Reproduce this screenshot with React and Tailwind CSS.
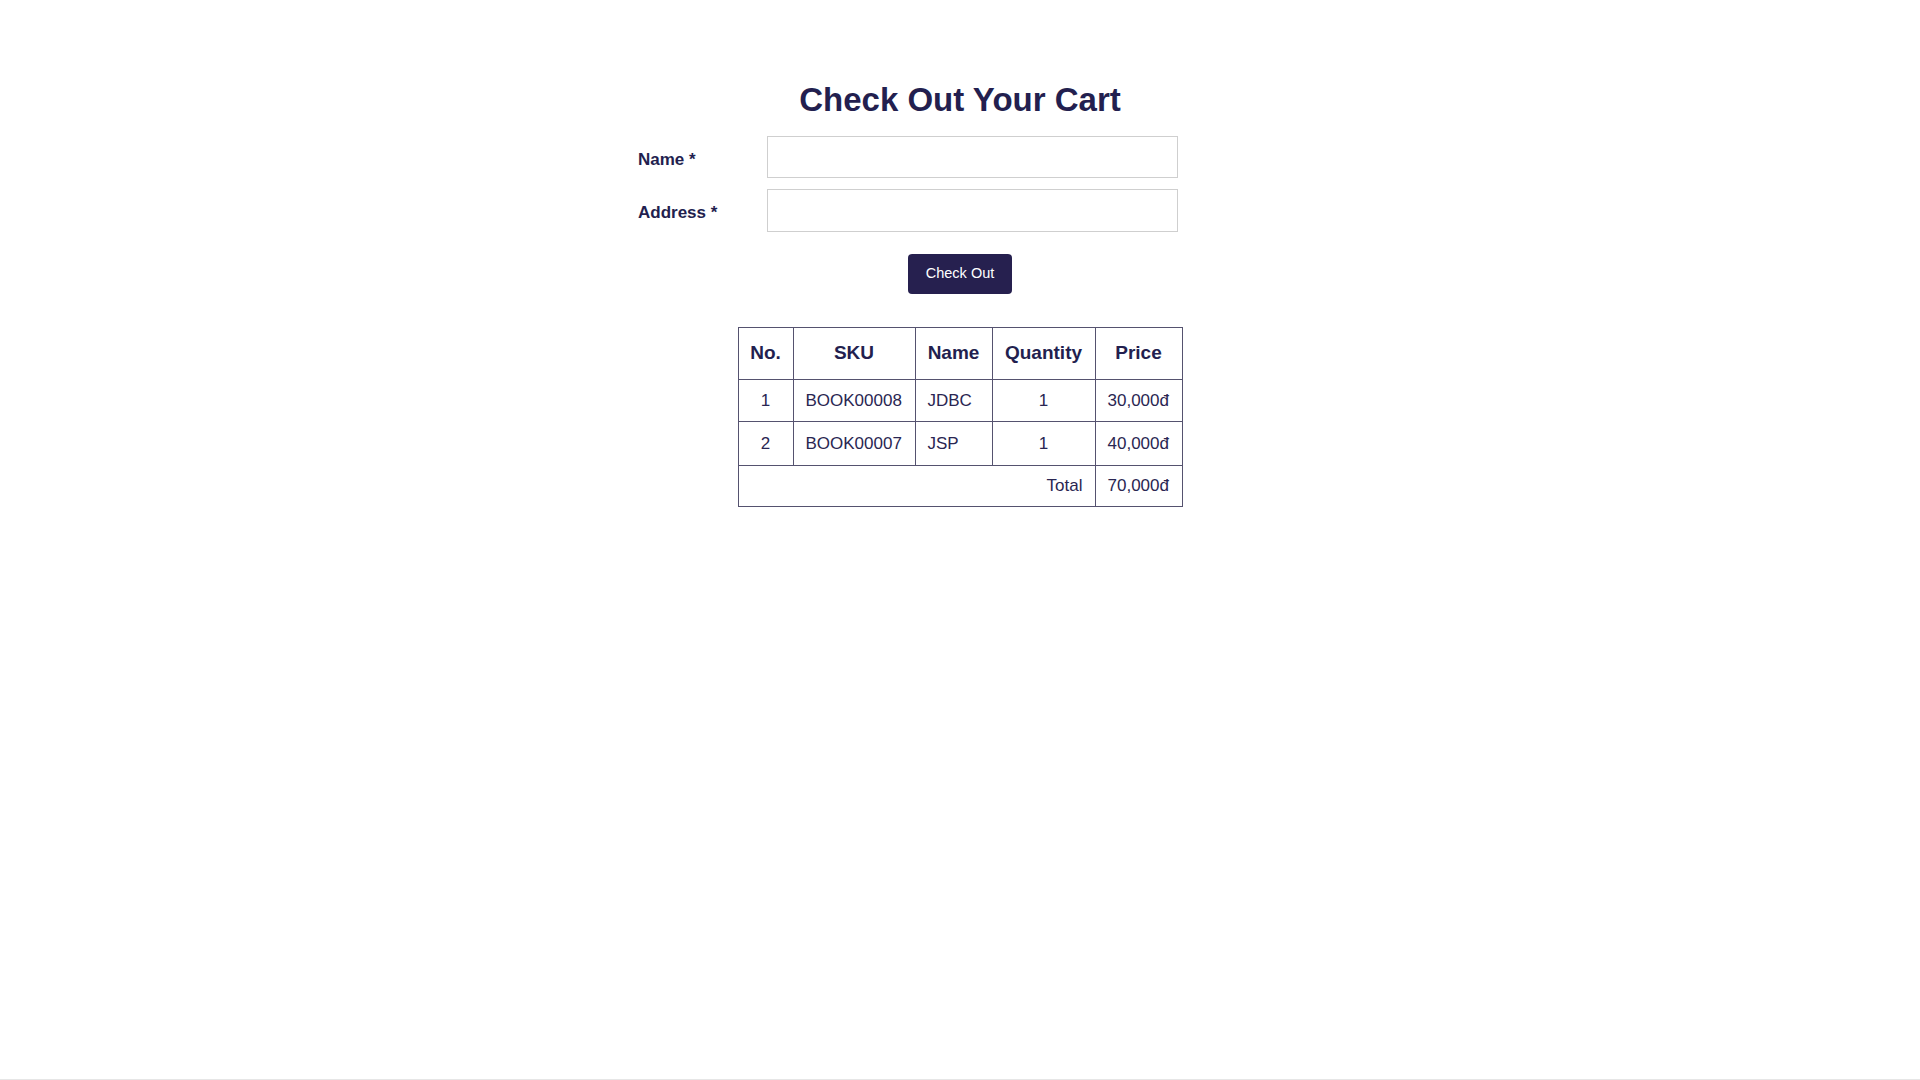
export default function App() {
  const items = [
    { no: 1, sku: 'BOOK00008', name: 'JDBC', qty: 1, price: '30,000đ' },
    { no: 2, sku: 'BOOK00007', name: 'JSP', qty: 1, price: '40,000đ' },
  ]

  return (
    <div className="h-[1080px] border-b border-[#e6e6e6] bg-white font-['Liberation_Sans',Arial,sans-serif] text-[#231f4f]">
      <div className="pt-[81px] flex flex-col items-center">
        <h1 className="text-[33px] leading-[38px] font-bold">Check Out Your Cart</h1>

        <form className="mt-[17px] w-[644px] flex flex-col gap-[11px]" onSubmit={(e) => e.preventDefault()}>
          <div className="flex items-center">
            <label className="w-[129px] pt-[5px] text-[17px] font-bold">Name *</label>
            <input className="w-[411px] h-[42px] border border-[#cfcfcf] px-3 text-[16px] outline-none" />
          </div>
          <div className="flex items-center">
            <label className="w-[129px] pt-[5px] text-[17px] font-bold">Address *</label>
            <input className="w-[411px] h-[43px] border border-[#cfcfcf] px-3 text-[16px] outline-none" />
          </div>
        </form>

        <button className="mt-[22px] w-[104px] h-[40px] rounded bg-[#26204f] text-white text-[14.5px]">
          Check Out
        </button>

        <table className="mt-[33px] w-[444px] table-fixed border-collapse border border-[#55526f]">
          <colgroup>
            <col className="w-[55px]" />
            <col className="w-[122px]" />
            <col className="w-[77px]" />
            <col className="w-[103px]" />
            <col className="w-[87px]" />
          </colgroup>
          <thead>
            <tr className="h-[52px] text-[19px] font-bold">
              <th className="border border-[#55526f]">No.</th>
              <th className="border border-[#55526f]">SKU</th>
              <th className="border border-[#55526f]">Name</th>
              <th className="border border-[#55526f]">Quantity</th>
              <th className="border border-[#55526f]">Price</th>
            </tr>
          </thead>
          <tbody className="text-[17px] text-[#2a2652]">
            {items.map((t, i) => (
              <tr key={t.sku} className={i === 0 ? 'h-[42px]' : 'h-[44px]'}>
                <td className="border border-[#55526f] text-center">{t.no}</td>
                <td className="border border-[#55526f] px-3 whitespace-nowrap">{t.sku}</td>
                <td className="border border-[#55526f] px-3">{t.name}</td>
                <td className="border border-[#55526f] text-center">{t.qty}</td>
                <td className="border border-[#55526f] px-3 whitespace-nowrap">{t.price}</td>
              </tr>
            ))}
            <tr className="h-[41px]">
              <td colSpan={4} className="border border-[#55526f] px-3 text-right">Total</td>
              <td className="border border-[#55526f] px-3 whitespace-nowrap">70,000đ</td>
            </tr>
          </tbody>
        </table>
      </div>
    </div>
  )
}
